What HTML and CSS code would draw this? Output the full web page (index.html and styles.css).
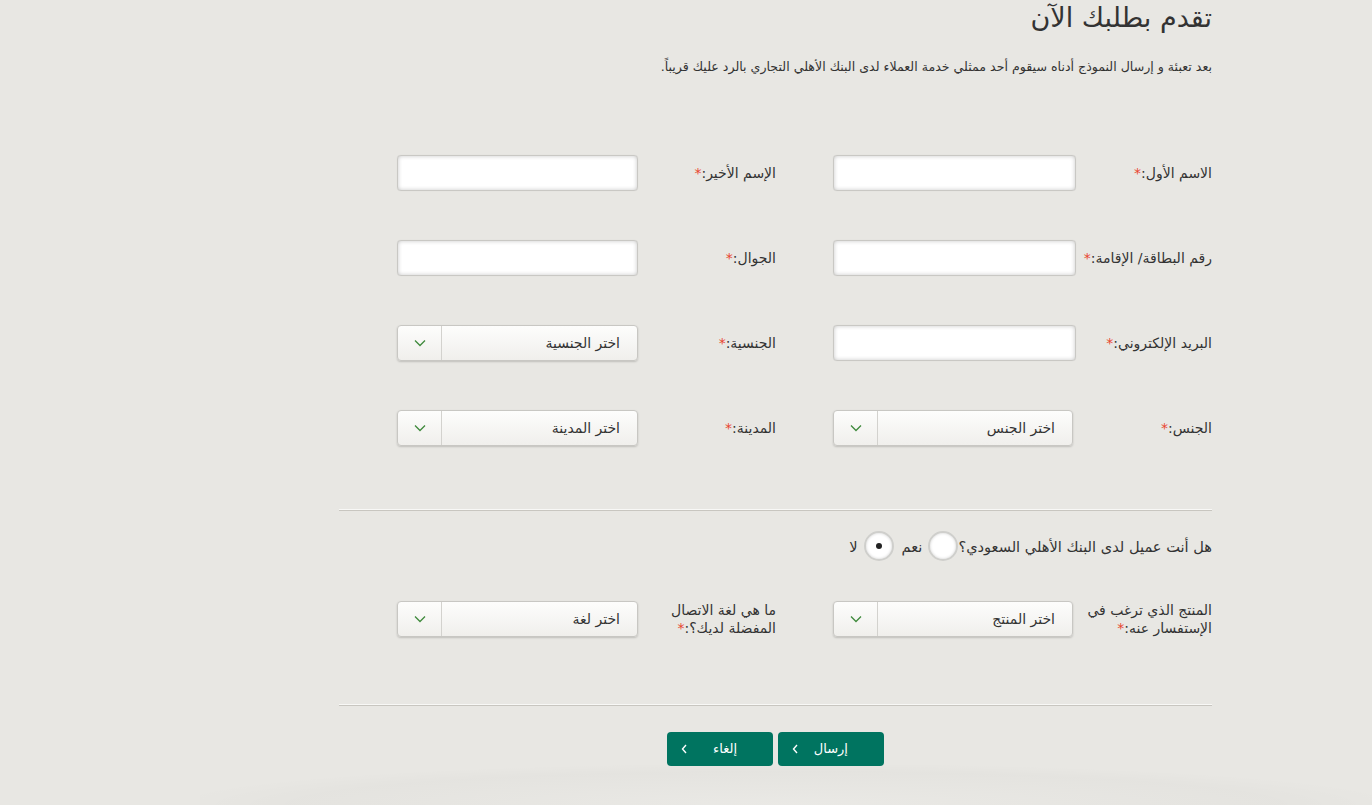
FILE: index.html
```html
<!DOCTYPE html>
<html lang="ar" dir="rtl">
<head>
<meta charset="utf-8">
<title>تقدم بطلبك الآن</title>
<link rel="stylesheet" href="styles.css">
</head>
<body>
<div class="page">
  <main class="apply">
    <h1 class="apply-title">تقدم بطلبك الآن</h1>
    <p class="apply-intro">بعد تعبئة و إرسال النموذج أدناه سيقوم أحد ممثلي خدمة العملاء لدى البنك الأهلي التجاري بالرد عليك قريباً.</p>

    <form class="apply-form">
      <div class="grid">
        <div class="field">
          <label class="field-label">الاسم الأول:<span class="req">*</span></label>
          <input class="text-input" type="text">
        </div>
        <div class="field">
          <label class="field-label">الإسم الأخير:<span class="req">*</span></label>
          <input class="text-input" type="text">
        </div>

        <div class="field">
          <label class="field-label">رقم البطاقة/ الإقامة:<span class="req">*</span></label>
          <input class="text-input" type="text">
        </div>
        <div class="field">
          <label class="field-label">الجوال:<span class="req">*</span></label>
          <input class="text-input" type="text">
        </div>

        <div class="field">
          <label class="field-label">البريد الإلكتروني:<span class="req">*</span></label>
          <input class="text-input" type="text">
        </div>
        <div class="field">
          <label class="field-label">الجنسية:<span class="req">*</span></label>
          <div class="select">
            <span class="select-value">اختر الجنسية</span>
            <span class="select-arrow"><svg width="12" height="8" viewBox="0 0 12 8"><path d="M1 1.5 6 6.5 11 1.5" fill="none" stroke="#3f8a3c" stroke-width="1.3"/></svg></span>
          </div>
        </div>

        <div class="field">
          <label class="field-label">الجنس:<span class="req">*</span></label>
          <div class="select">
            <span class="select-value">اختر الجنس</span>
            <span class="select-arrow"><svg width="12" height="8" viewBox="0 0 12 8"><path d="M1 1.5 6 6.5 11 1.5" fill="none" stroke="#3f8a3c" stroke-width="1.3"/></svg></span>
          </div>
        </div>
        <div class="field">
          <label class="field-label">المدينة:<span class="req">*</span></label>
          <div class="select">
            <span class="select-value">اختر المدينة</span>
            <span class="select-arrow"><svg width="12" height="8" viewBox="0 0 12 8"><path d="M1 1.5 6 6.5 11 1.5" fill="none" stroke="#3f8a3c" stroke-width="1.3"/></svg></span>
          </div>
        </div>
      </div>

      <hr class="divider">

      <div class="question">
        <span class="question-text">هل أنت عميل لدى البنك الأهلي السعودي؟</span>
        <span class="radio"></span>
        <span class="radio-label">نعم</span>
        <span class="radio checked"></span>
        <span class="radio-label">لا</span>
      </div>

      <div class="grid grid-second">
        <div class="field">
          <label class="field-label">المنتج الذي ترغب في الإستفسار عنه:<span class="req">*</span></label>
          <div class="select">
            <span class="select-value">اختر المنتج</span>
            <span class="select-arrow"><svg width="12" height="8" viewBox="0 0 12 8"><path d="M1 1.5 6 6.5 11 1.5" fill="none" stroke="#3f8a3c" stroke-width="1.3"/></svg></span>
          </div>
        </div>
        <div class="field">
          <label class="field-label">ما هي لغة الاتصال المفضلة لديك؟:<span class="req">*</span></label>
          <div class="select">
            <span class="select-value">اختر لغة</span>
            <span class="select-arrow"><svg width="12" height="8" viewBox="0 0 12 8"><path d="M1 1.5 6 6.5 11 1.5" fill="none" stroke="#3f8a3c" stroke-width="1.3"/></svg></span>
          </div>
        </div>
      </div>

      <hr class="divider divider-bottom">

      <div class="actions">
        <button type="button" class="btn"><span>إرسال</span><svg class="btn-chev" width="7" height="10" viewBox="0 0 7 10"><path d="M5 1 1.5 5 5 9" fill="none" stroke="#fff" stroke-width="1.4"/></svg></button>
        <button type="button" class="btn"><span>إلغاء</span><svg class="btn-chev" width="7" height="10" viewBox="0 0 7 10"><path d="M5 1 1.5 5 5 9" fill="none" stroke="#fff" stroke-width="1.4"/></svg></button>
      </div>
    </form>
  </main>
</div>
<div class="floor"></div>
</body>
</html>
```

FILE: styles.css
```css
* { box-sizing: border-box; }

html, body {
  margin: 0;
  height: 100%;
}

body {
  background: #e8e7e3;
  font-family: "DejaVu Sans", "Noto Sans", sans-serif;
  color: #333;
  overflow: hidden;
  position: relative;
}

.page {
  display: flex;
  justify-content: flex-start;
  padding-right: 160px;
}

.apply {
  width: 873px;
}

.apply-title {
  margin: 0;
  padding-top: 1px;
  font-size: 27px;
  font-weight: normal;
  line-height: 33px;
  color: #333;
}

.apply-intro {
  margin: 25px 0 0;
  font-size: 12.6px;
  line-height: 16px;
  color: #333;
}

.apply-form {
  margin-top: 80px;
}

.grid {
  display: grid;
  grid-template-columns: 379px 379px;
  column-gap: 57px;
  row-gap: 49px;
}

.field {
  display: flex;
  align-items: center;
  height: 36px;
}

.field-label {
  width: 136px;
  flex: none;
  padding-left: 6px;
  font-size: 14px;
  line-height: 18px;
  color: #333;
}

.req {
  color: #e8452f;
}

.text-input {
  width: 243px;
  height: 36px;
  border: 1px solid #c9c8c4;
  border-radius: 4px;
  background: #fff;
  box-shadow: inset 0 0 4px rgba(0, 0, 0, 0.22), 0 0 1px rgba(0, 0, 0, 0.1);
  outline: none;
}

.select {
  width: 240px;
  height: 36px;
  margin-right: 3px;
  display: flex;
  align-items: stretch;
  border: 1px solid #c8c7c3;
  border-radius: 4px;
  background: linear-gradient(#fdfdfc, #f0efec);
  box-shadow: 0 1px 2px rgba(0, 0, 0, 0.18);
}

.field:nth-child(even) .text-input,
.field:nth-child(even) .select {
  width: 241px;
  margin-right: 0;
}

.field:nth-child(even) .field-label {
  width: 138px;
}

.select-value {
  flex: 1;
  display: flex;
  align-items: center;
  padding-right: 17px;
  font-size: 14px;
  color: #333;
}

.select-arrow {
  width: 44px;
  flex: none;
  display: flex;
  align-items: center;
  justify-content: center;
  border-right: 1px solid #d3d2ce;
}

.divider {
  margin: 63px 0 0;
  height: 0;
  border: 0;
  border-top: 1px solid #f8f8f6;
  border-bottom: 1px solid #c8c6c0;
}

.question {
  display: flex;
  align-items: center;
  margin-top: 20px;
  font-size: 14.6px;
  color: #333;
}

.radio {
  width: 30px;
  height: 30px;
  border-radius: 50%;
  border: 2px solid #cfcfcc;
  background: #fff;
  box-shadow: inset 0 0 3px rgba(0, 0, 0, 0.18);
  display: inline-flex;
  align-items: center;
  justify-content: center;
}

.radio.checked::after {
  content: "";
  width: 6px;
  height: 6px;
  border-radius: 50%;
  background: #222;
}

.radio-label {
  margin: 0 6px 0 8px;
}

.grid-second {
  margin-top: 40px;
}

.divider-bottom {
  margin-top: 67px;
}

.actions {
  display: flex;
  justify-content: center;
  gap: 5px;
  margin-top: 26px;
}

.btn {
  width: 106px;
  height: 34px;
  border: 0;
  border-radius: 4px;
  background: #007460;
  color: #fff;
  font-family: "DejaVu Sans", sans-serif;
  font-size: 13px;
  display: flex;
  align-items: center;
  justify-content: space-between;
  padding: 0 36px 1px 14px;
  direction: rtl;
}

.btn-chev {
  display: block;
}

.floor {
  position: absolute;
  left: 200px;
  right: 0;
  bottom: -40px;
  height: 80px;
  background: radial-gradient(ellipse at center, rgba(255, 255, 255, 0.08), rgba(0, 0, 0, 0.015) 60%, transparent 75%);
  pointer-events: none;
}
```
